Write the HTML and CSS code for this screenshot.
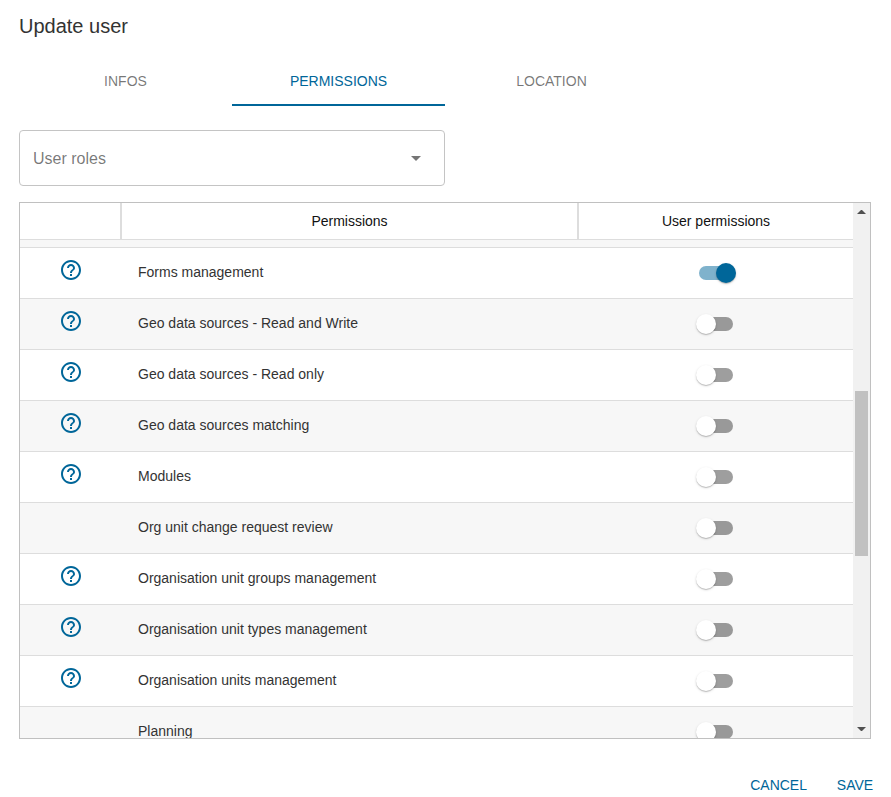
FILE: index.html
```
<!DOCTYPE html>
<html lang="en">
<head>
    <meta charset="UTF-8">
    <meta name="viewport" content="width=device-width, initial-scale=1.0">
    <title>Update user</title>
    <link rel="stylesheet" href="styles.css">
</head>
<body>

    <main class="dialog">
        <h1>Update user</h1>

        <div class="tabs" role="tablist">
            <button type="button" role="tab" class="tab">INFOS</button>
            <button type="button" role="tab" class="tab active" aria-selected="true">PERMISSIONS</button>
            <button type="button" role="tab" class="tab">LOCATION</button>
        </div>

        <div class="select-box">
            <select id="roles" aria-label="User roles">
                <option value="">User roles</option>
            </select>
            <svg class="arrow" viewBox="0 0 24 24" aria-hidden="true"><path d="M7 10l5 5 5-5z"/></svg>
        </div>

        <div class="table-box">
            <div class="table-view">
                <table>
                    <thead>
                        <tr>
                            <th class="col-help"></th>
                            <th>Permissions</th>
                            <th class="col-switch">User permissions</th>
                        </tr>
                    </thead>
                    <tbody id="rows">
                        <tr class="cut"><td></td><td></td><td></td></tr>
                    </tbody>
                </table>
            </div>
            <div class="scrollbar" aria-hidden="true">
                <svg viewBox="0 0 17 17"><path d="M4 11l4-4h1l4 4z"/></svg>
                <div class="track"><div class="thumb"></div></div>
                <svg viewBox="0 0 17 17"><path d="M4 6l4 4h1l4-4z"/></svg>
            </div>
        </div>

        <div class="actions">
            <button type="button">CANCEL</button>
            <button type="button">SAVE</button>
        </div>
    </main>

    <script>
        const permissions = [
            { name: "Forms management", help: true, on: true },
            { name: "Geo data sources - Read and Write", help: true },
            { name: "Geo data sources - Read only", help: true },
            { name: "Geo data sources matching", help: true },
            { name: "Modules", help: true },
            { name: "Org unit change request review" },
            { name: "Organisation unit groups management", help: true },
            { name: "Organisation unit types management", help: true },
            { name: "Organisation units management", help: true },
            { name: "Planning" }
        ];

        const helpButton = `<button type="button" class="help" aria-label="Help"><svg viewBox="0 0 24 24"><path d="M11 18h2v-2h-2v2zm1-16C6.480 2 2 6.480 2 12s4.480 10 10 10 10-4.480 10-10S17.520 2 12 2zm0 18c-4.410 0-8-3.590-8-8s3.590-8 8-8 8 3.590 8 8-3.590 8-8 8zm0-14c-2.210 0-4 1.790-4 4h2c0-1.100.9-2 2-2s2 .9 2 2c0 2-3 1.750-3 5h2c0-2.250 3-2.500 3-5 0-2.210-1.790-4-4-4z"/></svg></button>`;

        document.getElementById("rows").innerHTML += permissions.map((p, i) => `
            <tr>
                <td class="col-help">${p.help ? helpButton : ""}</td>
                <td><label for="perm${i}">${p.name}</label></td>
                <td class="col-switch"><input type="checkbox" class="switch" id="perm${i}"${p.on ? " checked" : ""}></td>
            </tr>`).join("");
    </script>

</body>
</html>
```
FILE: styles.css
```
* {
    box-sizing: border-box;
}
body {
    margin: 0;
    background: #fff;
    color: #333;
    font-family: "Liberation Sans", Arial, sans-serif;
    font-size: 14px;
}
button {
    font: inherit;
    padding: 0;
    border: none;
    background: none;
    cursor: pointer;
}
.dialog {
    display: flex;
    flex-direction: column;
    height: 100vh;
    padding: 10px 20px 0 19px;
}
h1 {
    margin: 0 0 16px;
    font-size: 20px;
    font-weight: 400;
    line-height: 32px;
}

/* tabs */
.tabs {
    display: grid;
    grid-template-columns: repeat(4, 1fr);
    margin-bottom: 24px;
}
.tab {
    height: 48px;
    color: rgba(0, 0, 0, 0.54);
    border-bottom: 2px solid transparent;
}
.tab.active {
    color: #006699;
    border-bottom-color: #006699;
}

/* roles select */
.select-box {
    position: relative;
    width: 50%;
    margin-bottom: 16px;
}
.select-box select {
    display: block;
    width: 100%;
    height: 56px;
    padding: 0 48px 0 13px;
    appearance: none;
    border: 1px solid #c4c4c4;
    border-radius: 4px;
    background: #fff;
    color: rgba(0, 0, 0, 0.54);
    font: inherit;
    font-size: 16px;
}
.arrow {
    position: absolute;
    top: 16px;
    right: 17px;
    width: 24px;
    height: 24px;
    fill: rgba(0, 0, 0, 0.54);
    pointer-events: none;
}

/* permissions table */
.table-box {
    display: flex;
    flex: 1;
    min-height: 0;
    border: 1px solid #c0c0c0;
}
.table-view {
    flex: 1;
    overflow: hidden;
}
table {
    width: 100%;
    table-layout: fixed;
    border-collapse: separate;
    border-spacing: 0;
}
th {
    height: 37px;
    padding: 0;
    font-weight: 400;
    color: #111;
    border-right: 2px solid #ddd;
    border-bottom: 1px solid #ddd;
}
th:last-child {
    border-right: none;
}
td {
    height: 51px;
    padding: 0 16px 2px;
    line-height: 20px;
    border-bottom: 1px solid #ddd;
}
tbody tr:nth-child(odd) {
    background: #f7f7f7;
}
.cut td {
    height: 8px;
}
.col-help {
    width: 102px;
    text-align: center;
}
.col-switch {
    width: 274px;
    padding: 0;
    text-align: center;
}
.help {
    display: block;
    margin: 0 auto 4px;
}
.help svg {
    display: block;
    width: 24px;
    height: 24px;
    fill: #006699;
}

/* switch */
.switch {
    position: relative;
    display: block;
    width: 40px;
    height: 20px;
    margin: 0 auto;
    appearance: none;
    cursor: pointer;
}
.switch::before {
    content: "";
    position: absolute;
    top: 3px;
    left: 3px;
    width: 34px;
    height: 14px;
    border-radius: 7px;
    background: #000;
    opacity: 0.38;
}
.switch::after {
    content: "";
    position: absolute;
    top: 0;
    left: 0;
    width: 20px;
    height: 20px;
    border-radius: 50%;
    background: #fff;
    box-shadow: 0 1px 3px rgba(0, 0, 0, 0.12), 0 1px 1px rgba(0, 0, 0, 0.2);
}
.switch:checked::before {
    background: #006699;
    opacity: 0.5;
}
.switch:checked::after {
    left: 20px;
    background: #006699;
}

/* scrollbar */
.scrollbar {
    display: flex;
    flex-direction: column;
    width: 17px;
    background: #f1f1f1;
}
.scrollbar svg {
    width: 17px;
    height: 17px;
    fill: #505050;
}
.track {
    flex: 1;
    padding: 0 2px;
}
.thumb {
    height: 33%;
    margin-top: 171px;
    background: #c1c1c1;
}

/* footer */
.actions {
    display: flex;
    justify-content: flex-end;
    gap: 8px;
    margin: 34px -16px 0 0;
}
.actions button {
    min-width: 64px;
    height: 24px;
    padding: 0 8px;
    color: #006699;
}
```
